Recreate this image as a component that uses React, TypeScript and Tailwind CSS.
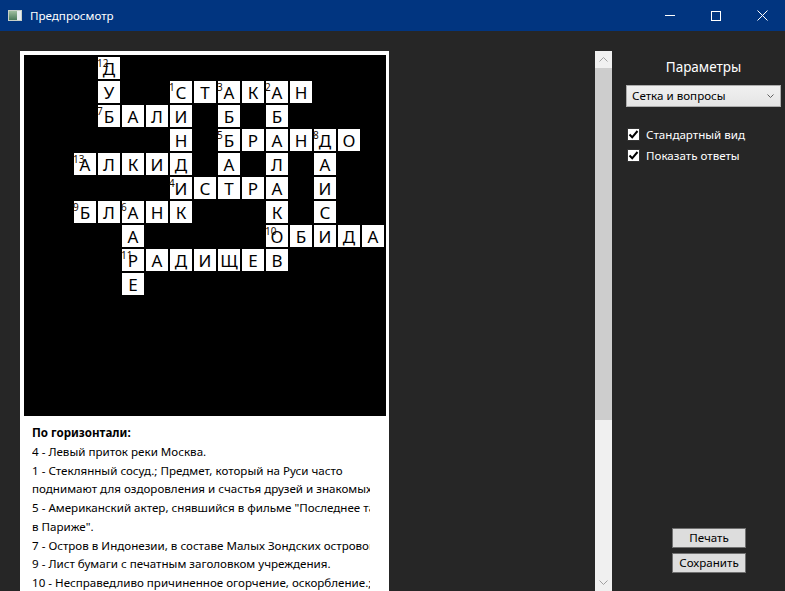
import React from "react";

type Cell = { r: number; c: number; ch: string; n?: number };

const words: { r: number; c: number; dir: "h" | "v"; text: string; n?: number }[] = [
  { r: 0, c: 3, dir: "v", text: "ДУБ", n: 12 },
  { r: 1, c: 6, dir: "h", text: "СТАКАН", n: 1 },
  { r: 2, c: 3, dir: "h", text: "БАЛИ", n: 7 },
  { r: 1, c: 8, dir: "v", text: "АББАТ", n: 3 },
  { r: 1, c: 10, dir: "v", text: "АБАЛАКОВ", n: 2 },
  { r: 1, c: 6, dir: "v", text: "СИНДИК" },
  { r: 3, c: 8, dir: "h", text: "БРАНДО", n: 5 },
  { r: 3, c: 12, dir: "v", text: "ДАИСИ", n: 8 },
  { r: 4, c: 2, dir: "h", text: "АЛКИД", n: 13 },
  { r: 5, c: 6, dir: "h", text: "ИСТРА", n: 4 },
  { r: 6, c: 2, dir: "h", text: "БЛАНК", n: 9 },
  { r: 6, c: 4, dir: "v", text: "ААРЕ", n: 6 },
  { r: 7, c: 10, dir: "h", text: "ОБИДА", n: 10 },
  { r: 8, c: 4, dir: "h", text: "РАДИЩЕВ", n: 11 },
];

function buildCells(): Cell[] {
  const map = new Map<string, Cell>();
  for (const w of words) {
    [...w.text].forEach((ch, i) => {
      const r = w.dir === "v" ? w.r + i : w.r;
      const c = w.dir === "h" ? w.c + i : w.c;
      const key = `${r}-${c}`;
      const existing = map.get(key);
      const cell: Cell = existing ?? { r, c, ch };
      if (i === 0 && w.n !== undefined) cell.n = w.n;
      map.set(key, cell);
    });
  }
  return [...map.values()];
}

const cells = buildCells();

const clues = [
  "4 - Левый приток реки Москва.",
  "1 - Стеклянный сосуд.; Предмет, который на Руси часто поднимают для оздоровления и счастья друзей и знакомых.",
  "5 - Американский актер, снявшийся в фильме \"Последнее танго в Париже\".",
  "7 - Остров в Индонезии, в составе Малых Зондских островов.",
  "9 - Лист бумаги с печатным заголовком учреждения.",
  "10 - Несправедливо причиненное огорчение, оскорбление.; Чувство, вызванное несправедливостью.",
];

function CheckBox({ label }: { label: string }) {
  return (
    <div className="flex items-center h-[21px]">
      <div className="w-[13px] h-[13px] bg-white border border-[#333] flex items-center justify-center">
        <svg width="11" height="11" viewBox="0 0 11 11">
          <path d="M1.5 5.5 L4.2 8.3 L9.5 2" stroke="#000" strokeWidth="2" fill="none" />
        </svg>
      </div>
      <span className="ml-[6px] text-[11.6px] text-white leading-[16px]">{label}</span>
    </div>
  );
}

export default function App() {
  return (
    <div
      className="w-[785px] h-[591px] flex flex-col bg-[#262626] overflow-hidden"
      style={{ fontFamily: '"Noto Sans", "Open Sans", sans-serif' }}
    >
      {/* Title bar */}
      <div className="h-[31px] bg-[#013580] flex items-center shrink-0">
        <div className="ml-[8px] w-[14px] h-[11px] border border-[#c8d0c8] flex">
          <div className="w-[8px] h-full bg-gradient-to-b from-[#9fbf9f] to-[#4a7a5a]" />
          <div className="flex-1 bg-[#e8eef0]" />
        </div>
        <span className="ml-[8px] text-[11.6px] text-white leading-none">Предпросмотр</span>
        <div className="ml-auto flex h-full items-center">
          <div className="w-[46px] h-full flex items-center justify-center">
            <div className="w-[10px] h-px bg-white" />
          </div>
          <div className="w-[46px] h-full flex items-center justify-center">
            <div className="w-[10px] h-[10px] border border-white" />
          </div>
          <div className="w-[46px] h-full flex items-center justify-center">
            <svg width="11" height="11" viewBox="0 0 11 11">
              <path d="M0.5 0.5 L10.5 10.5 M10.5 0.5 L0.5 10.5" stroke="#fff" strokeWidth="1" />
            </svg>
          </div>
        </div>
      </div>

      {/* Body */}
      <div className="flex flex-1 min-h-0">
        {/* Scroll viewer */}
        <div className="w-[612px] flex pt-[20px] min-h-0">
          <div className="flex-1 pl-[20px] overflow-hidden">
            <div className="w-[369px] bg-white pt-[4px] pl-[4px] pb-[20px]">
              <div className="w-[362px] h-[361px] bg-black pt-[2px] pl-[2px]">
                <div className="grid grid-cols-[repeat(15,22px)] grid-rows-[repeat(15,22px)] gap-[2px]">
                  {cells.map((cell) => (
                    <div
                      key={`${cell.r}-${cell.c}`}
                      className="relative bg-white flex items-center justify-center text-[17px] leading-none text-black"
                      style={{ gridRowStart: cell.r + 1, gridColumnStart: cell.c + 1 }}
                    >
                      {cell.ch}
                      {cell.n !== undefined && (
                        <span className="absolute left-[-1px] top-[1px] text-[10px] leading-none text-[#1a0d00]">
                          {cell.n}
                        </span>
                      )}
                    </div>
                  ))}
                </div>
              </div>
              <div className="ml-[8px] mt-[8px] w-[338px] overflow-hidden text-[11.6px] leading-[18.75px] text-black">
                <div className="w-[366px]">
                  <div className="font-bold">По горизонтали:</div>
                  {clues.map((t) => (
                    <div key={t}>{t}</div>
                  ))}
                </div>
              </div>
            </div>
          </div>
          {/* Scrollbar */}
          <div className="w-[17px] flex flex-col bg-[#f0f0f0]">
            <div className="h-[17px] flex items-center justify-center">
              <svg width="9" height="5" viewBox="0 0 9 5">
                <path d="M0.5 4.5 L4.5 0.5 L8.5 4.5" stroke="#a0a0a0" fill="none" />
              </svg>
            </div>
            <div className="h-[352px] mx-0 bg-[#cdcdcd]" />
            <div className="flex-1" />
            <div className="h-[17px] flex items-center justify-center">
              <svg width="9" height="5" viewBox="0 0 9 5">
                <path d="M0.5 0.5 L4.5 4.5 L8.5 0.5" stroke="#a0a0a0" fill="none" />
              </svg>
            </div>
          </div>
        </div>

        {/* Right panel */}
        <div className="flex-1 flex flex-col pl-[14px] pr-[4px]">
          <div className="mt-[27px] text-center text-[13.5px] leading-[19px] text-white">Параметры</div>
          <div className="mt-[8px] h-[22px] border border-[#acacac] bg-gradient-to-b from-[#f0f0f0] to-[#e5e5e5] flex items-center pl-[5px] pr-[6px]">
            <span className="text-[11.6px] text-black leading-none">Сетка и вопросы</span>
            <svg className="ml-auto" width="7" height="4" viewBox="0 0 7 4">
              <path d="M0.5 0.5 L3.5 3.5 L6.5 0.5" stroke="#606060" fill="none" />
            </svg>
          </div>
          <div className="mt-[17px] pl-[1px] flex flex-col">
            <CheckBox label="Стандартный вид" />
            <CheckBox label="Показать ответы" />
          </div>
          <div className="mt-auto mb-[18px] ml-[46px] flex flex-col items-start gap-[5px]">
            <button className="w-[74px] h-[20px] bg-[#dddddd] border border-[#707070] text-[11.6px] text-black leading-none">
              Печать
            </button>
            <button className="w-[74px] h-[20px] bg-[#dddddd] border border-[#707070] text-[11.6px] text-black leading-none">
              Сохранить
            </button>
          </div>
        </div>
      </div>
    </div>
  );
}
